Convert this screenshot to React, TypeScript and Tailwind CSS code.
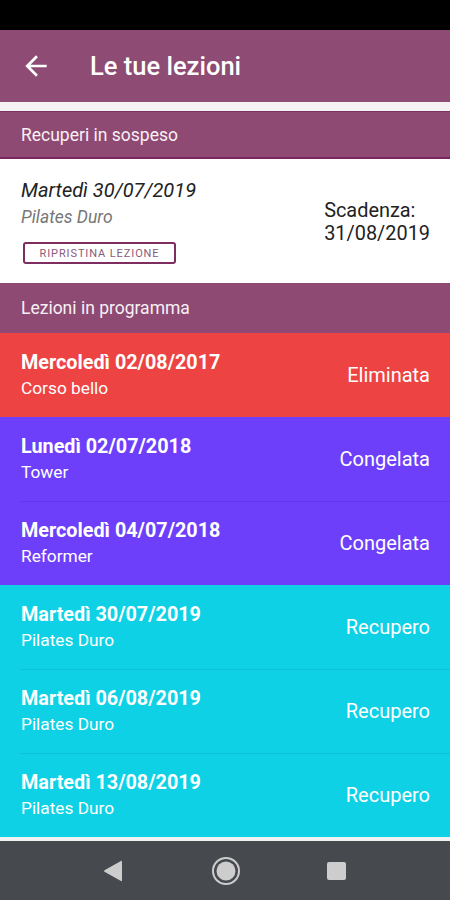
import React from "react";

type Row = { title: string; sub: string; status: string; bg: string; divider: string };

const rows: Row[] = [
  { title: "Mercoledì 02/08/2017", sub: "Corso bello", status: "Eliminata", bg: "bg-[#ee4343]", divider: "" },
  { title: "Lunedì 02/07/2018", sub: "Tower", status: "Congelata", bg: "bg-[#6e3ffb]", divider: "" },
  { title: "Mercoledì 04/07/2018", sub: "Reformer", status: "Congelata", bg: "bg-[#6e3ffb]", divider: "border-t border-[#6535ee]" },
  { title: "Martedì 30/07/2019", sub: "Pilates Duro", status: "Recupero", bg: "bg-[#0ed1e6]", divider: "" },
  { title: "Martedì 06/08/2019", sub: "Pilates Duro", status: "Recupero", bg: "bg-[#0ed1e6]", divider: "border-t border-[#0bc2d6]" },
  { title: "Martedì 13/08/2019", sub: "Pilates Duro", status: "Recupero", bg: "bg-[#0ed1e6]", divider: "border-t border-[#0bc2d6]" },
];

export default function App() {
  return (
    <div className="w-[450px] h-[900px] flex flex-col overflow-hidden bg-white" style={{ fontFamily: "Roboto, 'Noto Sans', sans-serif" }}>
      {/* status bar */}
      <div className="h-[30px] bg-black shrink-0" />
      {/* app bar */}
      <div className="h-[72px] bg-[#8e4b74] flex items-center shrink-0">
        <svg className="ml-[20px] w-[32px] h-[32px]" viewBox="0 0 24 24" fill="#ffffff">
          <path d="M20 11H7.83l5.59-5.59L12 4l-8 8 8 8 1.41-1.41L7.83 13H20v-2z" />
        </svg>
        <span className="ml-[38px] text-white text-[25.5px] font-medium leading-[30px]">Le tue lezioni</span>
      </div>
      {/* stripe */}
      <div className="h-[9px] bg-[#f4f2f3] shrink-0" />
      {/* header 1 */}
      <div className="h-[48px] bg-[#8e4a73] border-t border-[#7c3562] border-b-2 border-b-[#7a2660] flex items-center pl-[21px] shrink-0">
        <span className="text-[#f8f0f5] text-[17.5px] leading-[22px]">Recuperi in sospeso</span>
      </div>
      {/* card */}
      <div className="h-[124px] bg-white flex items-center justify-between pl-[21px] pr-[20px] shrink-0">
        <div className="flex flex-col items-start">
          <span className="italic text-[20px] leading-[24px] text-[#222222]">Martedì 30/07/2019</span>
          <span className="italic text-[17.5px] leading-[22px] text-[#777777] mt-[4px]">Pilates Duro</span>
          <div className="mt-[14px] ml-[2px] w-[153px] h-[22px] border-2 border-[#7e2d60] rounded-[3px] flex items-center justify-center">
            <span className="text-[11px] tracking-[0.9px] text-[#8c5a7a] leading-none">RIPRISTINA LEZIONE</span>
          </div>
        </div>
        <div className="flex flex-col text-[19.9px] leading-[23px] text-[#222222] mt-[1px]">
          <span>Scadenza:</span>
          <span>31/08/2019</span>
        </div>
      </div>
      {/* header 2 */}
      <div className="h-[50px] bg-[#8e4a73] flex items-center pl-[21px] shrink-0">
        <span className="text-[#f8f0f5] text-[17.5px] leading-[22px]">Lezioni in programma</span>
      </div>
      {/* rows */}
      {rows.map((r, i) => (
        <div key={i} className={`h-[84px] ${r.bg} shrink-0 relative`}>
          {r.divider && <div className={`absolute left-[20px] right-0 top-0 ${r.divider}`} />}
          <div className="h-full flex items-center justify-between pl-[21px] pr-[20px]">
            <div className="flex flex-col">
              <span className="text-white font-bold text-[19.8px] leading-[24px]">{r.title}</span>
              <span className="text-white text-[17.3px] leading-[22px] mt-[2px]">{r.sub}</span>
            </div>
            <span className="text-white text-[20px] leading-[24px]">{r.status}</span>
          </div>
        </div>
      ))}
      {/* white stripe */}
      <div className="h-[4px] bg-[#f2f2f2] shrink-0" />
      {/* nav bar */}
      <div className="flex-1 bg-[#464a4f] flex items-center">
        <svg className="ml-[103px] w-[20px] h-[22px]" viewBox="0 0 20 22">
          <path d="M19 1.5 L19 20.5 Q19 21.5 18 21 L1.5 11.8 Q0.5 11 1.5 10.2 L18 1 Q19 0.5 19 1.5 Z" fill="#cdcdcd" />
        </svg>
        <svg className="ml-[89px] w-[28px] h-[28px]" viewBox="0 0 28 28">
          <circle cx="14" cy="14" r="13" fill="none" stroke="#cdcdcd" strokeWidth="2" />
          <circle cx="14" cy="14" r="9.5" fill="#cdcdcd" />
        </svg>
        <div className="ml-[87px] w-[19px] h-[18px] bg-[#cdcdcd] rounded-[2px]" />
      </div>
    </div>
  );
}
